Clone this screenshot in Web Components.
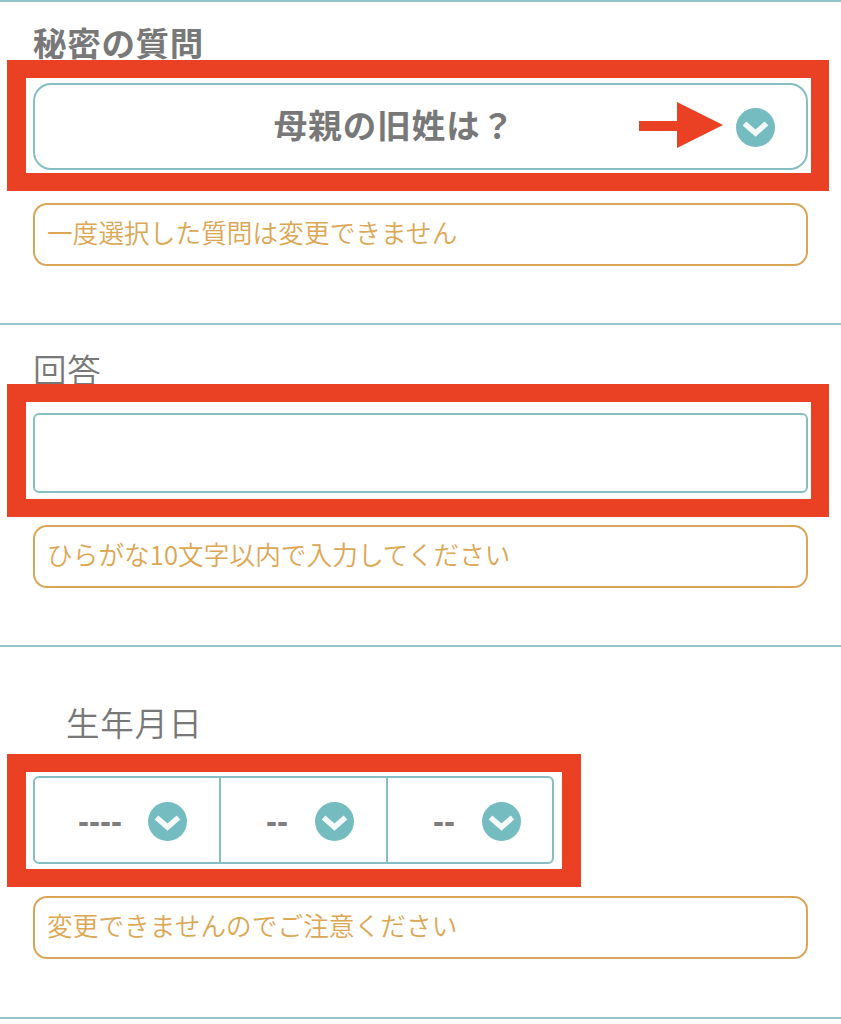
<!DOCTYPE html>
<html lang="ja">
<head>
<meta charset="utf-8">
<title>秘密の質問</title>
<style>
  html, body {
    margin: 0;
    background: #fff;
    font-family: "Noto Sans CJK JP", "Liberation Sans", sans-serif;
  }
</style>
</head>
<body>
<profile-section style="--top: 20px; --bottom: 57px; --label-gap: -2px; --note-gap: 12px">
  <field-label weight="700">秘密の質問</field-label>
  <red-mark style="--pt: 5px; --pb: 3px">
    <select-box radius="18" height="87">母親の旧姓は？</select-box>
    <red-arrow></red-arrow>
  </red-mark>
  <note-box>一度選択した質問は変更できません</note-box>
</profile-section>

<profile-section style="--top: 24px; --bottom: 57px; --label-gap: -5px; --note-gap: 8px">
  <field-label>回答</field-label>
  <red-mark style="--pt: 11px; --pb: 6px">
    <select-box radius="6" height="80" empty></select-box>
  </red-mark>
  <note-box>ひらがな10文字以内で入力してください</note-box>
</profile-section>

<profile-section style="--top: 55px; --bottom: 58px; --label-gap: 12px; --note-gap: 9px">
  <field-label indent="33">生年月日</field-label>
  <red-mark fit style="--pt: 4px; --pb: 5px">
    <date-picker></date-picker>
  </red-mark>
  <note-box>変更できませんのでご注意ください</note-box>
</profile-section>

<div style="border-top: 2px solid #93c6cb"></div>

<script>
class ProfileSection extends HTMLElement {
  constructor() {
    super();
    this.attachShadow({ mode: 'open' });
  }

  connectedCallback() {
    this.shadowRoot.innerHTML = `
      <style>
        :host {
          display: block;
          border-top: 2px solid #93c6cb;
          padding: var(--top) 32px var(--bottom) 33px;
        }
        ::slotted(field-label) {
          margin-bottom: var(--label-gap);
        }
        ::slotted(note-box) {
          margin: var(--note-gap) 1px 0 0;
        }
      </style>
      <slot></slot>
    `;
  }
}

class FieldLabel extends HTMLElement {
  constructor() {
    super();
    this.attachShadow({ mode: 'open' });
  }

  connectedCallback() {
    const weight = this.getAttribute('weight') || '350';
    const indent = this.getAttribute('indent') || '0';

    this.shadowRoot.innerHTML = `
      <style>
        :host {
          display: block;
          height: 40px;
          line-height: 40px;
          font-size: 33.5px;
          font-weight: ${weight};
          letter-spacing: 0.7px;
          color: #787878;
          padding-left: ${indent}px;
          white-space: nowrap;
        }
      </style>
      <slot></slot>
    `;
  }
}

// red annotation frame drawn over the form
class RedMark extends HTMLElement {
  constructor() {
    super();
    this.attachShadow({ mode: 'open' });
  }

  connectedCallback() {
    const fit = this.hasAttribute('fit');

    this.shadowRoot.innerHTML = `
      <style>
        :host {
          display: block;
          position: relative;
          box-sizing: border-box;
          width: ${fit ? 'fit-content' : 'auto'};
          border: solid #ea4125;
          border-width: 18px ${fit ? '19px' : '18px'} 18px 19px;
          margin: 0 ${fit ? '0' : '-20px'} 0 -26px;
          padding: var(--pt) ${fit ? '8px' : '3px'} var(--pb) 7px;
        }
      </style>
      <slot></slot>
    `;
  }
}

class RedArrow extends HTMLElement {
  constructor() {
    super();
    this.attachShadow({ mode: 'open' });
  }

  connectedCallback() {
    this.shadowRoot.innerHTML = `
      <style>
        :host {
          position: absolute;
          left: 613px;
          top: 24px;
          width: 84px;
          height: 46px;
        }
        svg { display: block; }
      </style>
      <svg width="84" height="46" viewBox="0 0 84 46">
        <path d="M0 19h38V0l46 23-46 23V29H0z" fill="#ea4125"/>
      </svg>
    `;
  }
}

class ChevronBadge extends HTMLElement {
  constructor() {
    super();
    this.attachShadow({ mode: 'open' });
  }

  connectedCallback() {
    this.shadowRoot.innerHTML = `
      <style>
        :host {
          display: block;
          flex: none;
          width: 39px;
          height: 39px;
          margin-top: 2px;
        }
        svg { display: block; }
      </style>
      <svg width="39" height="39" viewBox="0 0 39 39">
        <circle cx="19.5" cy="19.5" r="19.5" fill="#74bcc0"/>
        <path d="M8.5 15.5l11 9.5 11-9.5" fill="none" stroke="#f4fafa" stroke-width="5.5"/>
      </svg>
    `;
  }
}

class SelectBox extends HTMLElement {
  constructor() {
    super();
    this.attachShadow({ mode: 'open' });
  }

  connectedCallback() {
    const radius = this.getAttribute('radius') || '6';
    const height = this.getAttribute('height') || '80';
    const empty = this.hasAttribute('empty');

    this.shadowRoot.innerHTML = `
      <style>
        :host {
          display: flex;
          align-items: center;
          box-sizing: border-box;
          height: ${height}px;
          border: 2px solid #85bfc4;
          border-radius: ${radius}px;
          padding: 0 31px 0 18px;
          font-size: 33.5px;
          font-weight: 700;
          letter-spacing: 1px;
          color: #787878;
        }
        .value {
          flex: 1;
          text-align: center;
          padding-bottom: 6px;
        }
      </style>
      <div class="value"><slot></slot></div>
      ${empty ? '' : '<chevron-badge></chevron-badge>'}
    `;
  }
}

class DatePicker extends HTMLElement {
  constructor() {
    super();
    this.attachShadow({ mode: 'open' });
  }

  connectedCallback() {
    const cell = (text) => `
      <div class="cell">
        <span class="dash">${text}</span>
        <chevron-badge></chevron-badge>
      </div>
    `;

    this.shadowRoot.innerHTML = `
      <style>
        :host {
          display: grid;
          grid-template-columns: 184px 167px 1fr;
          box-sizing: border-box;
          width: 521px;
          height: 88px;
          border: 2px solid #85bfc4;
          border-radius: 6px;
        }
        .cell {
          display: flex;
          align-items: center;
          justify-content: flex-end;
          gap: 26px;
          padding-right: 32px;
        }
        .cell:last-child {
          padding-right: 31px;
        }
        .cell + .cell {
          gap: 27px;
          border-left: 2px solid #85bfc4;
        }
        .dash {
          padding-top: 3px;
          font-family: "Liberation Sans", sans-serif;
          font-size: 33px;
          font-weight: 700;
          color: #7d7d7d;
        }
      </style>
      ${cell('----')}
      ${cell('--')}
      ${cell('--')}
    `;
  }
}

class NoteBox extends HTMLElement {
  constructor() {
    super();
    this.attachShadow({ mode: 'open' });
  }

  connectedCallback() {
    this.shadowRoot.innerHTML = `
      <style>
        :host {
          display: flex;
          align-items: center;
          box-sizing: border-box;
          height: 63px;
          border: 2px solid #dba558;
          border-radius: 14px;
          padding: 0 0 6px 12px;
          font-size: 25.6px;
          font-weight: 350;
          letter-spacing: 0.1px;
          color: #dca653;
          white-space: nowrap;
        }
      </style>
      <slot></slot>
    `;
  }
}

customElements.define('profile-section', ProfileSection);
customElements.define('field-label', FieldLabel);
customElements.define('red-mark', RedMark);
customElements.define('red-arrow', RedArrow);
customElements.define('chevron-badge', ChevronBadge);
customElements.define('select-box', SelectBox);
customElements.define('date-picker', DatePicker);
customElements.define('note-box', NoteBox);
</script>
</body>
</html>
